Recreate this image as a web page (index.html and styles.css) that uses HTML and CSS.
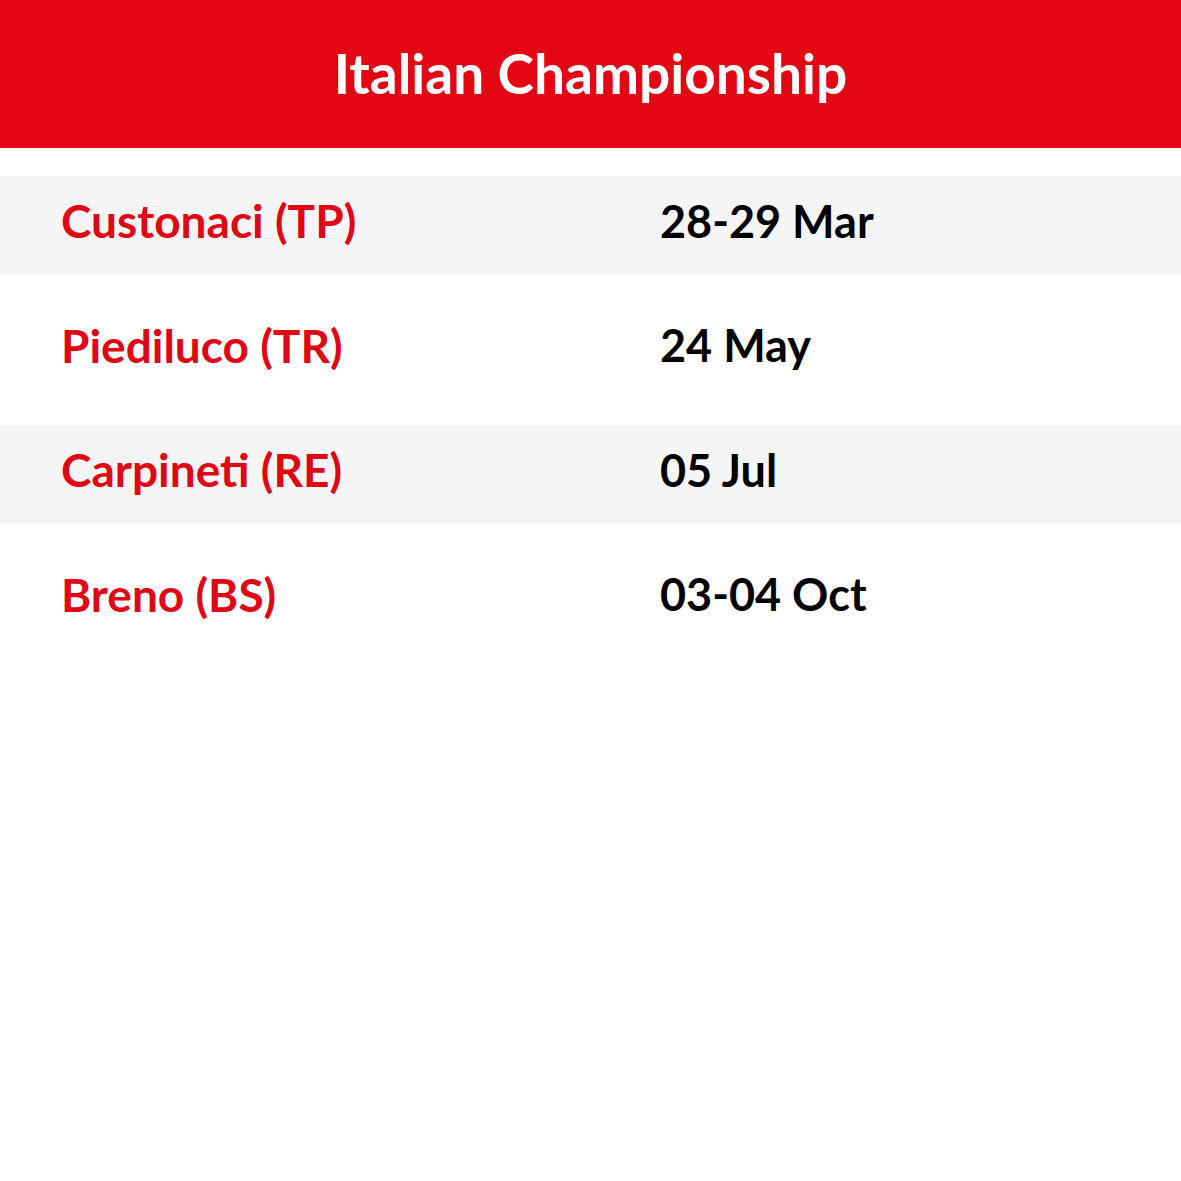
FILE: index.html
```html
<!DOCTYPE html>
<html>
<head>
<meta charset="utf-8">
<link rel="stylesheet" href="styles.css">
</head>
<body>
<header class="banner"><h1 class="title">Italian Championship</h1></header>
<section class="schedule">
  <div class="row shaded"><span class="place">Custonaci (TP)</span><span class="date">28-29 Mar</span></div>
  <div class="row"><span class="place">Piediluco (TR)</span><span class="date">24 May</span></div>
  <div class="row shaded"><span class="place">Carpineti (RE)</span><span class="date">05 Jul</span></div>
  <div class="row"><span class="place">Breno (BS)</span><span class="date">03-04 Oct</span></div>
</section>
</body>
</html>
```
FILE: styles.css
```css
html, body { margin: 0; padding: 0; background: #fff; }
body { width: 1181px; height: 1181px; font-family: Lato, "Open Sans", sans-serif; font-weight: 700; }
.banner { background: #e30613; height: 148px; display: flex; align-items: center; justify-content: center; }
.title { margin: 0; color: #fff; font-size: 55px; font-weight: 700; line-height: 1; padding-bottom: 2px; }
.schedule { margin-top: 28px; display: flex; flex-direction: column; gap: 26.5px; }
.row { height: 98px; box-sizing: border-box; padding: 0 0 8px 61px; display: grid; grid-template-columns: 599px 1fr; align-items: center; line-height: 1; }
.shaded { background: #f5f5f5; }
.place { color: #e00614; font-size: 46px; }
.date { color: #000; font-size: 45px; }
```
